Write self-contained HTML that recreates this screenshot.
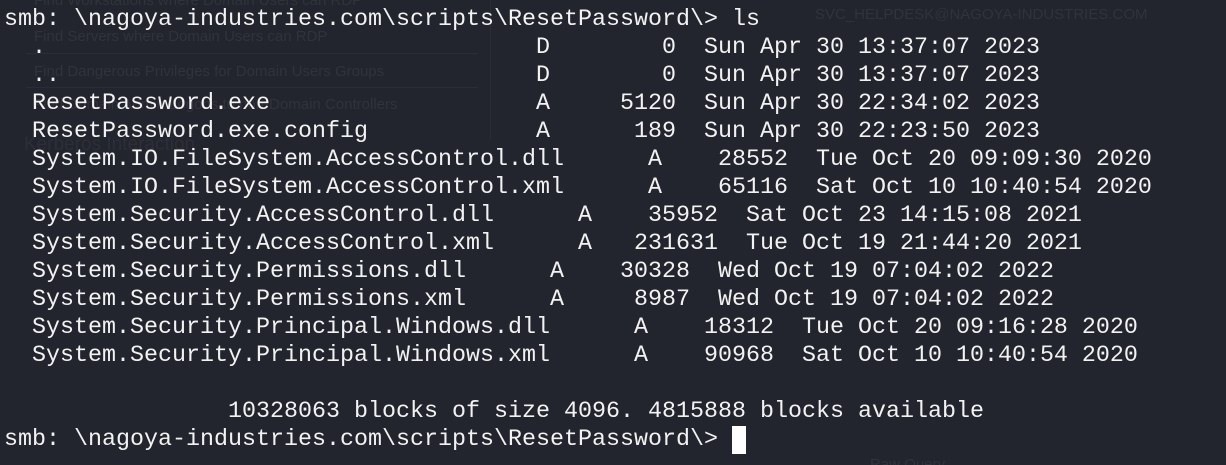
<!DOCTYPE html>
<html><head><meta charset="utf-8"><style>
html,body{margin:0;padding:0;background:#22252d;width:1226px;height:465px;overflow:hidden;position:relative}
.bg{position:absolute;font-family:"Liberation Sans",sans-serif;font-size:15px;color:#30333b;white-space:nowrap}
.ln{position:absolute;background:#2a2d35}
pre{position:absolute;left:4px;top:6px;margin:0;font-family:"Liberation Mono",monospace;font-size:23.33px;line-height:28px;color:#f2f2f2;white-space:pre}
.cur{display:inline-block;width:14px;height:28px;background:#fff;vertical-align:top}
</style></head><body>
<div class="bg" style="left:34px;top:-8px">Find Workstations where Domain Users can RDP</div>
<div class="bg" style="left:34px;top:28px">Find Servers where Domain Users can RDP</div>
<div class="bg" style="left:34px;top:63px">Find Dangerous Privileges for Domain Users Groups</div>
<div class="bg" style="left:34px;top:96px">Find Domain Admin Logons to non-Domain Controllers</div>
<div class="bg" style="left:24px;top:134px;font-size:19px;color:#2c2f37">Kerberos Interaction</div>
<div class="bg" style="left:815px;top:6px">SVC_HELPDESK@NAGOYA-INDUSTRIES.COM</div>
<div class="bg" style="left:870px;top:456px">Raw Query</div>
<div class="ln" style="left:26px;top:53px;width:452px;height:1px"></div>
<div class="ln" style="left:26px;top:87px;width:452px;height:1px"></div>
<div class="ln" style="left:490px;top:0;width:1px;height:140px"></div>
<pre>smb: \nagoya-industries.com\scripts\ResetPassword\&gt; ls
  .                                   D        0  Sun Apr 30 13:37:07 2023
  ..                                  D        0  Sun Apr 30 13:37:07 2023
  ResetPassword.exe                   A     5120  Sun Apr 30 22:34:02 2023
  ResetPassword.exe.config            A      189  Sun Apr 30 22:23:50 2023
  System.IO.FileSystem.AccessControl.dll      A    28552  Tue Oct 20 09:09:30 2020
  System.IO.FileSystem.AccessControl.xml      A    65116  Sat Oct 10 10:40:54 2020
  System.Security.AccessControl.dll      A    35952  Sat Oct 23 14:15:08 2021
  System.Security.AccessControl.xml      A   231631  Tue Oct 19 21:44:20 2021
  System.Security.Permissions.dll      A    30328  Wed Oct 19 07:04:02 2022
  System.Security.Permissions.xml      A     8987  Wed Oct 19 07:04:02 2022
  System.Security.Principal.Windows.dll      A    18312  Tue Oct 20 09:16:28 2020
  System.Security.Principal.Windows.xml      A    90968  Sat Oct 10 10:40:54 2020

                10328063 blocks of size 4096. 4815888 blocks available
smb: \nagoya-industries.com\scripts\ResetPassword\&gt; <span class="cur"></span></pre>
</body></html>
